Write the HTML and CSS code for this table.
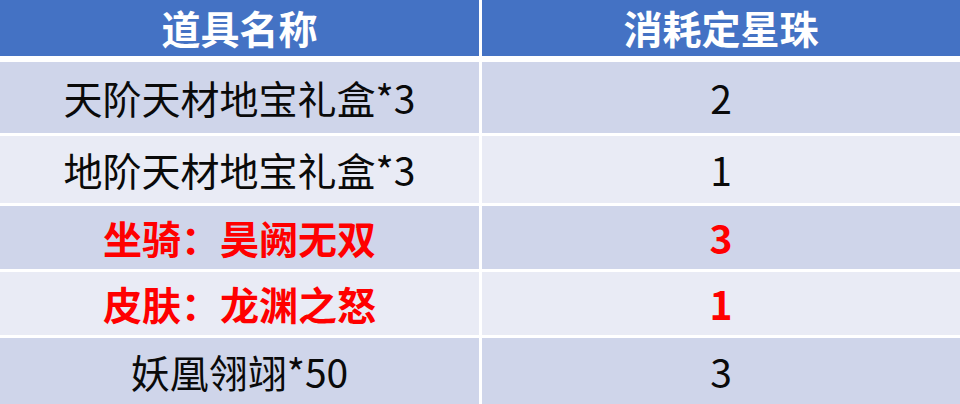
FILE: index.html
```html
<!DOCTYPE html>
<html lang="zh-CN">
<head>
<meta charset="utf-8">
<title>消耗定星珠</title>
<link rel="stylesheet" href="styles.css">
</head>
<body>
<div class="table">
  <div class="row head">
    <div class="cell">道具名称</div>
    <div class="cell">消耗定星珠</div>
  </div>
  <div class="row odd r1">
    <div class="cell">天阶天材地宝礼盒*3</div>
    <div class="cell">2</div>
  </div>
  <div class="row even r2">
    <div class="cell">地阶天材地宝礼盒*3</div>
    <div class="cell">1</div>
  </div>
  <div class="row odd r3 hot">
    <div class="cell">坐骑：昊阙无双</div>
    <div class="cell">3</div>
  </div>
  <div class="row even r4 hot">
    <div class="cell">皮肤：龙渊之怒</div>
    <div class="cell">1</div>
  </div>
  <div class="row odd r5">
    <div class="cell">妖凰翎翊*50</div>
    <div class="cell">3</div>
  </div>
</div>
</body>
</html>
```

FILE: styles.css
```css
html, body {
  margin: 0;
  padding: 0;
  background: #ffffff;
}

body {
  width: 960px;
  height: 404px;
  overflow: hidden;
  font-family: "Noto Sans CJK SC", "Noto Sans", sans-serif;
}

.table {
  display: flex;
  flex-direction: column;
  gap: 3px;
  background: #ffffff;
}

.row {
  display: grid;
  grid-template-columns: 479px 1fr;
  column-gap: 3px;
}

.cell {
  display: flex;
  align-items: center;
  justify-content: center;
  font-size: 39px;
  line-height: 1.25;
  color: #0a0a0a;
  white-space: nowrap;
}

.head {
  height: 56px;
  margin-bottom: 3px;
}

.head .cell {
  background: #4472c4;
  color: #ffffff;
  font-weight: 700;
  padding-bottom: 2px;
}

.odd .cell {
  background: #cfd5ea;
}

.even .cell {
  background: #e9ebf5;
}

.hot .cell {
  color: #ff0000;
  font-weight: 700;
}

.r1 { height: 71px; }
.r2 { height: 67px; }
.r3 { height: 63px; }
.r4 { height: 63px; }
.r5 { height: 66px; }
```
